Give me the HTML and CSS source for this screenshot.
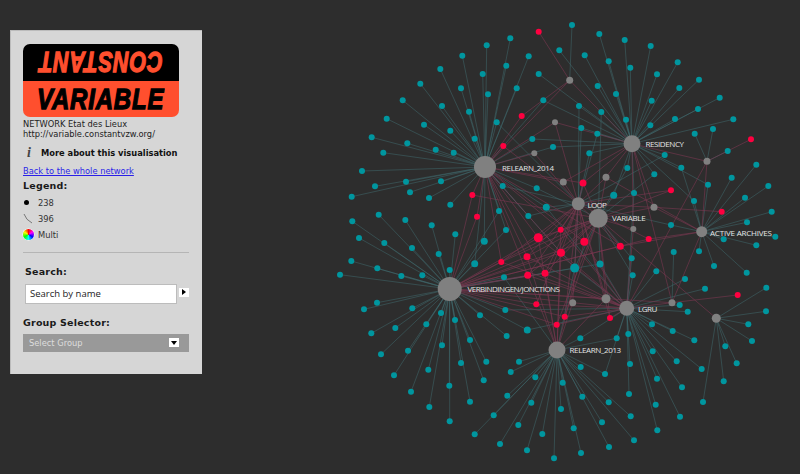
FILE: index.html
```html
<!DOCTYPE html>
<html lang="en">
<head>
<meta charset="utf-8">
<title>Variable network</title>
<link rel="stylesheet" href="styles.css">
</head>
<body>
<aside class="panel">
  <div class="logo">
    <div class="logo-top"><span class="logo-word logo-constant">CONSTANT</span></div>
    <div class="logo-bottom"><span class="logo-word logo-variable">VARIABLE</span></div>
  </div>
  <p class="meta">NETWORK Etat des Lieux<br>http://variable.constantvzw.org/</p>
  <div class="about"><span class="about-i">i</span><strong>More about this visualisation</strong></div>
  <a class="back" href="#">Back to the whole network</a>
  <h2 class="heading">Legend:</h2>
  <ul class="legend">
    <li><span class="key"><span class="dot"></span></span>238</li>
    <li><span class="key"><svg width="10" height="11" viewBox="0 0 10 11"><path d="M1 1Q3 7 9 10" fill="none" stroke="#777" stroke-width="1"/></svg></span>396</li>
    <li><span class="key"><span class="wheel"></span></span>Multi</li>
  </ul>
  <hr class="rule">
  <h2 class="heading heading-search">Search:</h2>
  <div class="search">
    <div class="search-box">Search by name</div>
    <span class="search-go"></span>
  </div>
  <h2 class="heading heading-group">Group Selector:</h2>
  <div class="select">Select Group<span class="select-arrow"></span></div>
</aside>
<svg id="graph" class="graph" viewBox="202 0 598 474" aria-label="Network graph"></svg>
<script src="script.js"></script>
</body>
</html>
```

FILE: styles.css
```css
* { box-sizing: border-box; }
html, body { margin: 0; height: 474px; overflow: hidden; }
body {
  display: flex;
  align-items: flex-start;
  background: #2d2d2d;
  font-family: "DejaVu Sans", sans-serif;
  color: #222;
}
.panel {
  flex: none;
  width: 192px;
  height: 344px;
  margin: 30px 0 0 10px;
  padding: 12.5px 13px 0 12px;
  background: #d6d6d6;
  font-size: 8.3px;
  border-left: 1px solid #bbb;
  border-top: 1px solid #bbb;
}
.logo {
  width: 156px;
  height: 73px;
  border-radius: 7px;
  overflow: hidden;
  font: italic bold 30px "Liberation Sans", sans-serif;
}
.logo-top, .logo-bottom {
  height: 37px;
  display: flex;
  align-items: center;
  justify-content: center;
}
.logo-top { background: #000; color: #ff4f2e; transform: rotate(180deg); }
.logo-bottom { height: 36px; background: #ff4f2e; color: #000; }
.logo-word { display: block; letter-spacing: 1px; -webkit-text-stroke: 1.3px currentColor; }
.logo-constant { transform: scaleX(0.72); }
.logo-variable { transform: scaleX(0.8); }
.meta { margin: 2px 0 0; line-height: 10.5px; }
.about { display: flex; align-items: center; margin-top: 6px; height: 14px; color: #111; white-space: nowrap; }
.about-i {
  width: 18px;
  padding-left: 4px;
  font: italic bold 14px "Liberation Serif", serif;
  color: #444;
  text-align: left;
}
.about strong { font-size: 8.3px; }
.back { display: block; margin-top: 6px; line-height: 11px; color: #2a1fe8; }
.heading { margin: 3px 0 0; font-size: 9.5px; line-height: 12px; font-weight: bold; color: #1a1a1a; letter-spacing: 0.2px; }
.legend { list-style: none; margin: 3px 0 0; padding: 0; color: #333; }
.legend li { display: flex; align-items: center; height: 16px; }
.key { width: 15px; display: flex; align-items: center; justify-content: flex-start; }
.dot { width: 5px; height: 5px; border-radius: 50%; background: #000; margin-left: 1px; }
.wheel {
  width: 11px;
  height: 11px;
  border-radius: 50%;
  background: conic-gradient(#f00, #f0f, #00f, #0ff, #0f0, #ff0, #f00);
  box-shadow: 0 0 0 0.5px #fff;
}
.rule { border: 0; height: 1px; background: #b5b5b5; margin: 9px 0 0; }
.heading-search { margin: 13px 0 0 2px; }
.search { display: flex; align-items: center; margin: 6px 0 0 2px; }
.search-box {
  width: 152px;
  height: 20px;
  padding-left: 4px;
  border: 1px solid #bcbcbc;
  background: #fff;
  font: 9.5px/18px "Open Sans", sans-serif;
  color: #222;
}
.search-go { width: 10px; height: 9px; margin-left: 2px; background: #fff; display: flex; align-items: center; justify-content: center; margin-top: -3px; }
.search-go::before { content: ""; border-left: 4px solid #000; border-top: 3.5px solid transparent; border-bottom: 3.5px solid transparent; }
.heading-group { margin-top: 13px; }
.select {
  display: flex;
  align-items: center;
  justify-content: space-between;
  height: 18px;
  margin-top: 5px;
  padding: 0 10px 0 6px;
  background: #999;
  color: #ddd;
  font-size: 8.3px;
}
.select-arrow { width: 10px; height: 9px; background: #fff; display: flex; align-items: center; justify-content: center; }
.select-arrow::before { content: ""; border-top: 4px solid #000; border-left: 3.5px solid transparent; border-right: 3.5px solid transparent; }
.graph { flex: 1; height: 474px; display: block; }
.edge { stroke-width: 0.8; fill: none; }
.edge-teal { stroke: #3f6a6e; stroke-opacity: 0.65; }
.edge-red { stroke: #7a3850; stroke-opacity: 0.75; }
.node-teal { fill: #00969f; }
.node-red { fill: #ff0040; }
.node-gray { fill: #808080; }
.label { font: 8px "Open Sans", sans-serif; fill: #e4e4e4; }
```

FILE: script.js
```js
var hubs = {
  A: [485, 167, 11, "RELEARN_2014", 502, 171, 52],
  B: [632, 143.7, 8.5, "RESIDENCY", 645.5, 147, 38.5],
  C: [578.3, 203.7, 6.5, "LOOP", 587.5, 208, 19.3],
  D: [598.3, 218.3, 9.5, "VARIABLE", 612, 221, 33.7],
  E: [701.7, 231.7, 5.5, "ACTIVE ARCHIVES", 710, 236, 62],
  F: [449.7, 289, 12, "VERBINDINGEN/JONCTIONS", 467.5, 292, 92.5],
  G: [626.7, 308.3, 7.5, "LGRU", 638, 312, 19.3],
  H: [557, 350, 8.5, "RELEARN_2013", 569.5, 353, 51.7],
  a: [569.7, 80.3, 3.5],
  b: [563.3, 182, 3.5],
  c: [555, 122.3, 3],
  d: [534.3, 153.3, 3],
  e: [606, 177.3, 3.5],
  f: [654, 207.3, 3.5],
  g: [633.3, 229, 3],
  h: [707, 161.3, 3.5],
  i: [572.7, 302.7, 3.5],
  j: [606, 298.7, 4.5],
  k: [672, 302.7, 3.5],
  l: [716.3, 318.3, 4.5]
};
var hubLinks = { a: "AB", b: "ABC", c: "ABC", d: "AC", e: "BCDE", f: "BCDE", g: "BDG", h: "BEG", i: "CFGH", j: "CDFGH", k: "BEFG", l: "D" };
var teal = {
  A: [510.3,38.3, 486.7,45.3, 462.3,55.7, 528.7,56.3, 506.3,65.7, 440.3,69, 482.7,74, 420.3,83.7, 461,88.3, 516.7,88.3, 488,94.3, 402.7,100.3, 442,106, 469,111.7, 386.7,118.7, 424,124.7, 450.3,130.7, 371.7,137.3, 474.7,138.7, 407.3,143.3, 383.3,152.7, 435.7,149.7, 453.7,152.7, 362,171, 441,181.3, 406,181.7, 375,186.3, 410,192.3, 351.7,196.7, 429,198, 450.3,204.7],
  B: [599.3,34, 624.7,40, 650.7,46, 559.3,50.3, 584.7,55.3, 677.7,62.3, 608.7,61.3, 630.3,67.7, 657,74.3, 699,79.7, 597.7,86, 679.3,88, 616,94, 719.7,97.7, 651.7,100.7, 698,109, 626,119.7, 675,119, 733.3,119.3, 650.3,125.3, 538.7,74],
  E: [756.3,164.7, 731.7,177.7, 745,197.7, 768.3,186, 771.7,211.7, 747,222.3, 775.3,236.7, 723.7,239.3, 756.3,245.3, 699,251.3, 714,266, 746.7,272.7],
  F: [378.7,214.7, 352.3,221.3, 405.3,220, 431.7,225.3, 455.3,234.3, 359,238, 384.3,243, 412,248, 438.7,254, 351.3,261, 377.3,268.3, 340,274.7, 401.3,276, 422.3,275.3, 449.7,270, 377,302.7, 364,309.3, 412.3,308.3, 441,313, 480,315.3, 455,320, 426.3,324.3, 395.3,328, 371.3,333.3, 506.7,336, 470,340, 442,345.3, 408,350.7, 381,354.3, 486.3,361.7, 461,363, 428.3,369.7, 394,375.3, 483.7,380.3, 449.3,385.7, 411,391.7, 470,401.7, 429.3,407, 449.7,421.3],
  H: [519,361.7, 510.7,372, 535.3,377.3, 507.3,395.7, 531.3,402.7, 493.7,415.3, 518.3,425, 474.7,434.3, 542.3,434, 500,444, 527,450.3, 554,458.3, 562.7,382.7, 582.3,396.7, 561,409, 573.7,428.3, 581,453, 609,447, 602,422.3, 608.7,402.3, 634,440.3, 630.7,416.3, 580.7,367],
  G: [652,324.3, 672.7,331, 694.3,340.3, 628.3,334, 652.7,351.3, 676.7,361.3, 701.7,369, 630,364, 657,378.7, 682,387.3, 629,394, 655.7,404.7, 680,416.7, 657.3,430.3, 656.3,271.3, 685,279, 705,288.7, 679.7,305, 687.7,311.7],
  l: [766.3,287.7, 766,311.3, 748.3,324.3, 752,341, 725.3,346.3, 736.7,363.3, 723.7,381.3, 703,402],
  a: [572,25],
  k: [673.7,252],
  h: [713,129, 694.7,133.7, 727.7,151]
};
/* teal nodes tied to several hubs: x, y, radius, hubs */
var tealMulti = [
  [502.7,186,3,"AC"], [536.7,188.3,3,"AD"], [546.3,207.3,3.5,"ACG"], [499,211,3,"AF"], [528.3,216,3,"AC"],
  [506,230,3,"AF"], [484.3,241.3,3.5,"AF"], [474.7,263.7,3.5,"AF"], [613.7,195.3,3.5,"BCD"], [634,193,3,"BG"],
  [631.7,258.3,3,"DG"], [632.7,275.3,3,"DG"], [600,264,3.5,"DFG"], [574.7,268,4.5,"ACDFGH"], [504,277.3,3,"FH"],
  [505.3,310,3,"FG"], [527.3,330,3.5,"FG"], [580.3,338.3,3,"GH"], [616.7,338.3,3,"GH"], [553,147,3,"AB"],
  [532.3,139,3,"AB"], [496.7,122.3,3,"AC"], [543.3,100.3,3,"AB"], [581.3,128,3,"BC"], [597.3,133.7,3,"BC"],
  [589.3,153.3,3,"BC"], [579,106,3,"BC"], [601.3,112,3,"BD"], [627.3,168,3,"BD"], [654.3,174.3,3,"BD"],
  [664.7,155,3,"BC"], [708,184.7,3,"BE"], [681.3,167.7,3,"BE"], [694,201,3,"BE"], [671,225,3,"CE"],
  [605,374,3,"GH"]
];
var red = [
  [538.7,31.7,3,"a"], [521.7,116,3,"Aa"], [503.3,146,3,"AC"], [472.3,195,3,"AFD"], [477,216.7,3,"AF"],
  [583,183,3.5,"BCAD"], [671,190.3,3,"DC"], [751,139.3,3,"h"], [721.7,211.7,3,"f"], [648.7,239,3,"EFC"],
  [620.3,246.3,3.5,"DEFAC"], [584.3,241.7,4,"CDFAGH"], [560.7,229.7,3,"CDFAGH"], [538.3,237.7,4.5,"CDFAGH"],
  [561,252.7,4,"CDFAGH"], [527,256.7,3.5,"CDFAGH"], [501.3,262,3,"CDFAG"], [527.7,275.3,3.5,"CDFAGH"],
  [545,273.3,3.5,"CDFAGH"], [536.3,304.3,3,"CFG"], [564.7,316.7,3,"CDFG"], [556.7,324.7,3,"FGD"],
  [610,318,3,"GCD"], [737.7,295,3,"k"]
];

var NS = "http://www.w3.org/2000/svg";
var svg = document.getElementById("graph");
var edges = document.createDocumentFragment();
var dots = document.createDocumentFragment();

function edge(x, y, key, kind) {
  var h = hubs[key], l = document.createElementNS(NS, "line");
  l.setAttribute("x1", x); l.setAttribute("y1", y);
  l.setAttribute("x2", h[0]); l.setAttribute("y2", h[1]);
  l.setAttribute("class", "edge edge-" + kind);
  edges.appendChild(l);
}
function dot(x, y, r, kind) {
  var c = document.createElementNS(NS, "circle");
  c.setAttribute("cx", x); c.setAttribute("cy", y); c.setAttribute("r", r);
  c.setAttribute("class", "node-" + kind);
  dots.appendChild(c);
}
Object.keys(teal).forEach(function (key) {
  var p = teal[key];
  for (var i = 0; i < p.length; i += 2) {
    edge(p[i], p[i + 1], key, "teal");
    dot(p[i], p[i + 1], 3, "teal");
  }
});
tealMulti.forEach(function (n) {
  n[3].split("").forEach(function (k) { edge(n[0], n[1], k, "teal"); });
  dot(n[0], n[1], n[2], "teal");
});
red.forEach(function (n) {
  n[3].split("").forEach(function (k) { edge(n[0], n[1], k, "red"); });
  dot(n[0], n[1], n[2], "red");
});
Object.keys(hubLinks).forEach(function (k) {
  hubLinks[k].split("").forEach(function (t) { edge(hubs[k][0], hubs[k][1], t, "red"); });
});
Object.keys(hubs).forEach(function (k) { dot(hubs[k][0], hubs[k][1], hubs[k][2], "gray"); });
svg.appendChild(edges);
svg.appendChild(dots);
Object.keys(hubs).forEach(function (k) {
  var h = hubs[k];
  if (!h[3]) return;
  var t = document.createElementNS(NS, "text");
  t.setAttribute("x", h[4]); t.setAttribute("y", h[5]);
  t.setAttribute("textLength", h[6]);
  t.setAttribute("class", "label");
  t.textContent = h[3];
  svg.appendChild(t);
});
```
